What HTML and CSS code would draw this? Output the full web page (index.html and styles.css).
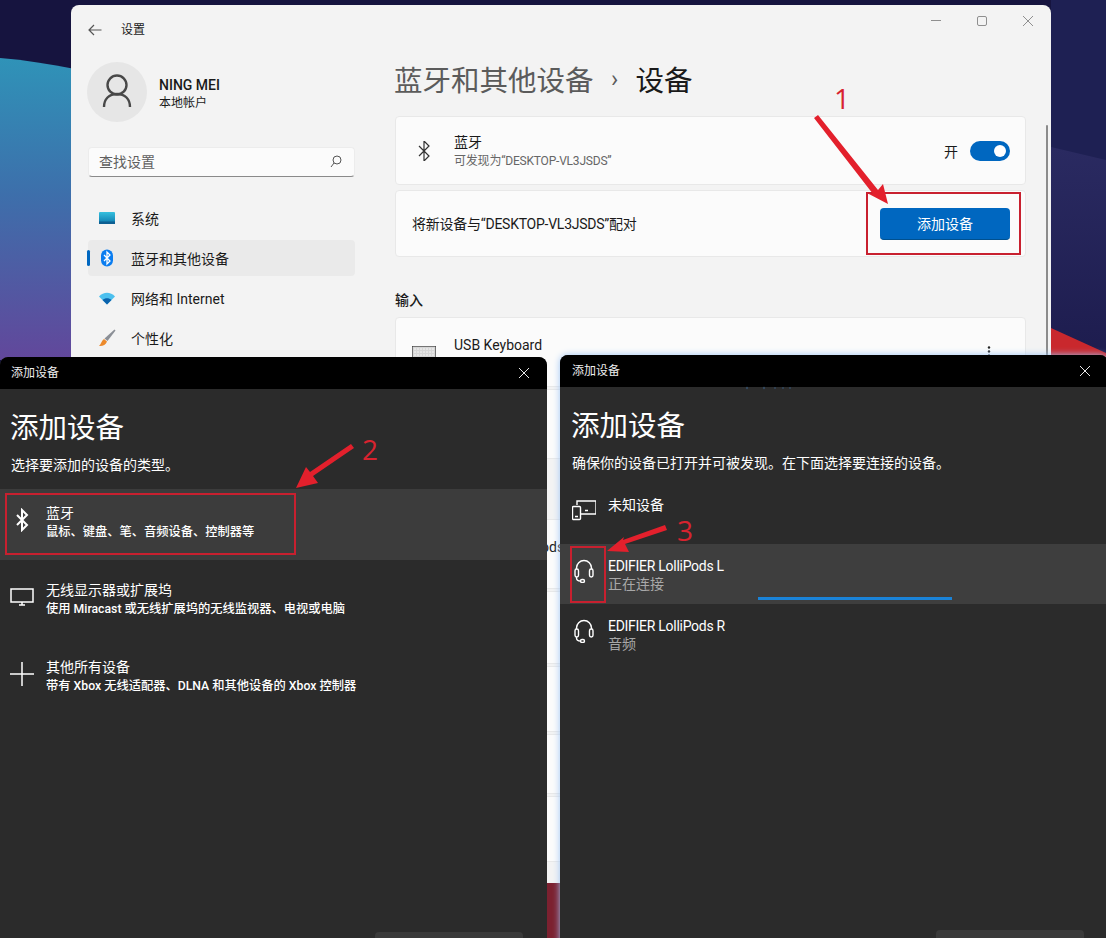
FILE: index.html
```html
<!doctype html>
<html>
<head>
<meta charset="UTF-8">
<title>添加设备</title>
<link rel="stylesheet" href="styles.css">
</head>
<body>

<!-- wallpaper -->
<svg class="wallpaper" width="1106" height="938" viewBox="0 0 1106 938">
  <defs>
    <linearGradient id="wave" x1="0" y1="0" x2="0" y2="1">
      <stop offset="0" stop-color="#2f93b8"/>
      <stop offset="0.45" stop-color="#3d6fab"/>
      <stop offset="1" stop-color="#62479b"/>
    </linearGradient>
    <linearGradient id="band" x1="0" y1="0" x2="0" y2="1">
      <stop offset="0" stop-color="#2a2a61"/>
      <stop offset="1" stop-color="#1d1c4e"/>
    </linearGradient>
  </defs>
  <rect width="1106" height="938" fill="#16143f"/>
  <rect x="1051" width="55" height="360" fill="#1e2053"/>
  <path d="M0 58C25 60 50 64 75 69V360H0Z" fill="url(#wave)"/>
  <path d="M1051 147L1106 160V360H1051Z" fill="url(#band)"/>
  <path d="M1051 328L1106 353V360H1051Z" fill="#c9282d"/>
  <rect x="547" y="883" width="13" height="55" fill="#7c2130"/>
</svg>

<!-- settings window -->
<section class="settings">
  <header class="settings-top">
    <svg class="back" width="14" height="12" viewBox="0 0 14 12"><path d="M13.5 6H1M6 1L1 6l5 5"/></svg>
    <span class="settings-name">设置</span>
    <div class="window-btns">
      <svg width="12" height="12" viewBox="0 0 12 12"><path d="M1 5.5H11"/></svg>
      <svg width="12" height="12" viewBox="0 0 12 12"><rect x="1.5" y="1.5" width="9" height="9" rx="1.5"/></svg>
      <svg width="12" height="12" viewBox="0 0 12 12"><path d="M1 1L11 11M11 1L1 11"/></svg>
    </div>
  </header>

  <div class="settings-body">
    <aside class="sidebar">
      <div class="account">
        <div class="avatar">
          <svg width="32" height="36" viewBox="0 0 32 36"><circle cx="16" cy="11" r="9.5"/><path d="M3 33c0-8 5-13 13-13s13 5 13 13"/></svg>
        </div>
        <div>
          <div class="account-name">NING MEI</div>
          <div class="account-type">本地帐户</div>
        </div>
      </div>

      <div class="search">
        <span>查找设置</span>
        <svg width="12" height="13" viewBox="0 0 12 13"><circle cx="7" cy="5" r="4"/><path d="M4 8L1 12"/></svg>
      </div>

      <nav class="nav">
        <div class="nav-item">
          <svg width="18" height="18" viewBox="0 0 18 18">
            <defs><linearGradient id="sys" x1="0" y1="0" x2="0" y2="1"><stop offset="0" stop-color="#35c0de"/><stop offset="1" stop-color="#0b77ac"/></linearGradient></defs>
            <rect x="1" y="3" width="16" height="12" rx="1" fill="url(#sys)"/>
            <rect x="1" y="12.5" width="16" height="2.5" fill="#0d5f92"/>
          </svg>
          <span>系统</span>
        </div>
        <div class="nav-item nav-active">
          <svg width="18" height="18" viewBox="0 0 18 18">
            <rect x="3" y="0.5" width="12" height="17" rx="6" fill="#0b7df0"/>
            <path class="nav-bt" d="M6 6l6 6-3 3V3l3 3-6 6"/>
          </svg>
          <span>蓝牙和其他设备</span>
        </div>
        <div class="nav-item">
          <svg width="18" height="18" viewBox="0 0 18 18">
            <path d="M1 7.5C5.500 2.500 12.500 2.500 17 7.500L9 15.500Z" fill="#4cc0ee"/>
            <path d="M4.500 11C7 8.500 11 8.500 13.500 11L9 15.500Z" fill="#0a62ac"/>
          </svg>
          <span>网络和 Internet</span>
        </div>
        <div class="nav-item">
          <svg width="18" height="18" viewBox="0 0 18 18">
            <path d="M16.500 0.500L17.500 1.500L9.500 12L6.500 9.500Z" fill="#8b8f96"/>
            <path d="M6 10L9 12.500C8 16 4 17.500 1 17C3 15.500 3.500 11.500 6 10Z" fill="#ec8a2c"/>
          </svg>
          <span>个性化</span>
        </div>
      </nav>
    </aside>

    <main class="main">
      <h1 class="crumbs"><span class="crumb-parent">蓝牙和其他设备</span><span class="crumb-sep">›</span><span>设备</span></h1>

      <div class="card card-bt">
        <svg class="card-icon" width="24" height="20" viewBox="0 0 24 20"><path d="M7 5l10 10-5 5V0l5 5L7 15"/></svg>
        <div class="card-text">
          <div class="card-title">蓝牙</div>
          <div class="card-sub">可发现为“DESKTOP-VL3JSDS”</div>
        </div>
        <span class="toggle-label">开</span>
        <span class="toggle"></span>
      </div>

      <div class="card card-pair">
        <span class="card-title pair-text">将新设备与“DESKTOP-VL3JSDS”配对</span>
        <button class="add-btn">添加设备</button>
      </div>

      <h2 class="section-head">输入</h2>
      <div class="card card-dev row-a">
        <svg class="card-icon" width="24" height="18" viewBox="0 0 24 18">
          <rect width="24" height="18" fill="#d6d6d6"/>
          <path class="keys" d="M2 3H22M2 6H22M2 9H22M2 12H22"/>
        </svg>
        <div class="card-text">
          <div class="card-title">USB Keyboard</div>
        </div>
        <svg class="kebab" width="4" height="12" viewBox="0 0 4 12"><circle cx="2" cy="1.500" r="1.200"/><circle cx="2" cy="5.500" r="1.200"/><circle cx="2" cy="9.500" r="1.200"/></svg>
      </div>
      <div class="card card-dev row-a"></div>

      <h2 class="section-head head-audio">音频</h2>
      <div class="card card-dev row-a">
        <div class="card-text indent"><div class="card-title">EDIFIER LolliPods</div></div>
      </div>
      <div class="card card-dev row-b"></div>
      <div class="card card-dev row-c"></div>
      <div class="card card-dev row-d"></div>
      <div class="card card-dev row-c"></div>
    </main>
  </div>
  <span class="scrollbar"></span>
</section>

<!-- left dialog -->
<section class="dialog dialog-left">
  <header class="dialog-top">
    <span>添加设备</span>
    <svg width="12" height="12" viewBox="0 0 12 12"><path d="M1 1L11 11M11 1L1 11"/></svg>
  </header>
  <div class="dialog-body">
    <h1 class="dialog-title">添加设备</h1>
    <p class="dialog-hint">选择要添加的设备的类型。</p>
    <div class="type-list">
      <div class="type-row type-active">
        <svg width="24" height="24" viewBox="0 0 24 24"><path class="thick" d="M7 7l10 10-5 5V2l5 5L7 17"/></svg>
        <div><div class="row-title">蓝牙</div><div class="row-sub">鼠标、键盘、笔、音频设备、控制器等</div></div>
      </div>
      <div class="type-row">
        <svg width="24" height="24" viewBox="0 0 24 24"><rect x="1" y="4" width="22" height="13"/><path d="M9 20H15M12 17V20"/></svg>
        <div><div class="row-title">无线显示器或扩展坞</div><div class="row-sub">使用 Miracast 或无线扩展坞的无线监视器、电视或电脑</div></div>
      </div>
      <div class="type-row">
        <svg width="24" height="24" viewBox="0 0 24 24"><path d="M0 12H24M12 0V24"/></svg>
        <div><div class="row-title">其他所有设备</div><div class="row-sub">带有 Xbox 无线适配器、DLNA 和其他设备的 Xbox 控制器</div></div>
      </div>
    </div>
  </div>
  <footer class="dialog-foot"><span class="cancel"></span></footer>
</section>

<!-- right dialog -->
<section class="dialog dialog-right">
  <header class="dialog-top">
    <span>添加设备</span>
    <svg width="12" height="12" viewBox="0 0 12 12"><path d="M1 1L11 11M11 1L1 11"/></svg>
  </header>
  <div class="dialog-body">
    <h1 class="dialog-title">添加设备</h1>
    <p class="dialog-hint">确保你的设备已打开并可被发现。在下面选择要连接的设备。</p>
    <div class="found-list">
      <div class="found-row">
        <svg class="device-icon" width="24" height="24" viewBox="0 0 24 24"><path d="M5 6V2H24V15H9"/><rect x="0.500" y="7.500" width="8" height="13" rx="1"/><path d="M3 17.500H6M13 11.500H16"/></svg>
        <div><div class="row-title">未知设备</div></div>
      </div>
      <div class="found-row found-active">
        <svg width="24" height="24" viewBox="0 0 24 24"><path d="M4.500 10V9a7.500 7.500 0 0 1 15 0v1"/><rect x="3" y="10" width="3.500" height="8" rx="1.700"/><rect x="17.500" y="10" width="3.500" height="8" rx="1.700"/><path d="M4.500 18v1c0 2 1.500 3 4 3"/><rect x="8.500" y="20.500" width="4" height="3" rx="1.500"/></svg>
        <div><div class="row-title name">EDIFIER LolliPods L</div><div class="row-state">正在连接</div></div>
        <span class="progress"></span>
      </div>
      <div class="found-row">
        <svg width="24" height="24" viewBox="0 0 24 24"><path d="M4.500 10V9a7.500 7.500 0 0 1 15 0v1"/><rect x="3" y="10" width="3.500" height="8" rx="1.700"/><rect x="17.500" y="10" width="3.500" height="8" rx="1.700"/><path d="M4.500 18v1c0 2 1.500 3 4 3"/><rect x="8.500" y="20.500" width="4" height="3" rx="1.500"/></svg>
        <div><div class="row-title name">EDIFIER LolliPods R</div><div class="row-state">音频</div></div>
      </div>
    </div>
  </div>
  <footer class="dialog-foot"><span class="cancel"></span></footer>
</section>

<!-- red notes drawn over the screenshots -->
<svg class="notes" width="1106" height="938" viewBox="0 0 1106 938">
  <g fill="#33485f">
    <circle cx="747" cy="388" r="1.200"/><circle cx="764" cy="388" r="1.200"/><circle cx="775" cy="388" r="1"/><circle cx="783" cy="388" r="1"/><circle cx="790" cy="388" r="1"/>
  </g>
  <rect class="note-box" x="867" y="193" width="153" height="61"/>
  <rect class="note-box" x="6" y="494" width="289" height="60"/>
  <rect class="note-box" x="571" y="547" width="34" height="55"/>
  <path class="note-arrow" d="M814 118L818 115L878 190L883 184L888 204L867 193L873 194Z"/>
  <path class="note-arrow" d="M351 444L354 448L313 476L318 483L296 488L306 467L310 472Z"/>
  <path class="note-arrow" d="M665 525L667 530L625 544L629 552L607 551L624 537L623 540Z"/>
</svg>
<span class="note-num num-1">1</span>
<span class="note-num num-2">2</span>
<span class="note-num num-3">3</span>

</body>
</html>
```

FILE: styles.css
```css
* { box-sizing: border-box; }
body { margin: 0; width: 1106px; height: 938px; position: relative; overflow: hidden; background: #16143f; font-family: Roboto, "Noto Sans CJK SC", sans-serif; font-size: 14px; color: #1a1a1a; }
h1, h2, p { margin: 0; font-weight: normal; }

.wallpaper { position: absolute; left: 0; top: 0; display: block; }

/* settings window */
.settings { position: absolute; left: 71px; top: 5px; width: 980px; height: 878px; background: #f3f3f3; border-radius: 8px 8px 0 0; overflow: hidden; }
.settings-top { display: flex; align-items: center; height: 48px; padding: 1px 17px 0 17px; }
.back { fill: none; stroke: #555; stroke-width: 1.2; }
.settings-name { margin-left: 19px; font-size: 12px; line-height: 16px; }
.window-btns { margin-left: auto; display: flex; gap: 34px; margin-top: -17px; }
.window-btns svg { fill: none; stroke: #8f8f8f; stroke-width: 1; }
.scrollbar { position: absolute; left: 975px; top: 120px; bottom: 0; width: 2px; border-radius: 1px; background: #8b8b8b; }

.settings-body { display: flex; }
.sidebar { width: 284px; padding: 9px 0 0 17px; flex: none; }
.account { display: flex; align-items: center; gap: 12px; margin-left: -1px; }
.avatar { width: 60px; height: 60px; border-radius: 50%; background: #e6e6e6; display: flex; align-items: center; justify-content: center; }
.avatar svg { fill: none; stroke: #484848; stroke-width: 2.4; }
.account-name { font-size: 14px; font-weight: 500; line-height: 18px; margin-top: 3px; }
.account-type { font-size: 12px; line-height: 16px; margin-top: 1px; }

.search { margin-top: 25px; height: 30px; display: flex; align-items: center; justify-content: space-between; padding: 0 12px 2px 10px; background: #fbfbfb; border: 1px solid #ececec; border-bottom: 1px solid #8a8a8a; border-radius: 4px; color: #5f5f5f; }
.search svg { fill: none; stroke: #555; stroke-width: 1; }

.nav { margin-top: 23px; display: flex; flex-direction: column; gap: 4px; }
.nav-item { position: relative; height: 36px; display: flex; align-items: center; gap: 15px; padding-left: 10px; border-radius: 4px; }
.nav-item svg { flex: none; margin-top: -1px; }
.nav-active { background: #eaeaea; }
.nav-active::before { content: ""; position: absolute; left: -1px; top: 10px; width: 3px; height: 16px; border-radius: 2px; background: #0067c0; }
.nav-bt { fill: none; stroke: #fff; stroke-width: 1.3; }

.main { flex: 1; padding: 9px 25px 0 40px; }
.crumbs { display: flex; align-items: center; height: 40px; font-size: 28.5px; line-height: 40px; margin: 0 0 14px -1px; }
.crumb-parent { color: #5b5b5b; }
.crumb-sep { width: 42px; text-align: center; font-size: 24px; color: #5b5b5b; margin-top: -6px; }

.card { display: flex; align-items: center; background: #fbfbfb; border: 1px solid #e8e8e8; border-radius: 4px; margin-bottom: 2px; }
.card-icon { flex: none; margin-left: 16px; fill: none; stroke: #333; stroke-width: 1.2; }
.card-text { margin-left: 18px; flex: 1; }
.card-title { font-size: 14px; line-height: 18px; }
.card-sub { font-size: 12px; line-height: 16px; color: #666; margin-top: 2px; letter-spacing: -0.2px; }
.card-bt { height: 69px; margin-bottom: 5px; padding-right: 15px; }
.card-bt .card-text { margin-top: 1px; }
.toggle-label { margin-right: 12px; }
.toggle { position: relative; width: 40px; height: 20px; border-radius: 10px; background: #0067c0; }
.toggle::after { content: ""; position: absolute; right: 4px; top: 4px; width: 12px; height: 12px; border-radius: 50%; background: #fff; }
.card-pair { height: 67px; padding: 0 15px 0 16px; justify-content: space-between; }
.pair-text { letter-spacing: -0.25px; }
.add-btn { width: 130px; height: 32px; border: 0; border-bottom: 1px solid #00508f; border-radius: 4px; background: #0067c0; color: #fff; font: inherit; font-size: 14px; }

.section-head { font-size: 14px; font-weight: 500; line-height: 20px; margin: 33px 0 7px; }
.head-audio { margin: 38px 0 0; height: 22px; }
.card-dev { align-items: flex-start; padding-top: 18px; }
.card-dev .card-icon { margin-top: 10px; }
.keys { stroke: #f5f5f5; stroke-width: 1; stroke-dasharray: 2 1; }
.indent { margin-left: 58px; }
.kebab { margin: 10px 34px 0 0; fill: #222; }
.row-a { height: 70px; }
.row-b { height: 73px; }
.row-c { height: 66px; }
.row-d { height: 60px; }

/* the two dark dialogs */
.dialog { position: absolute; display: flex; flex-direction: column; height: 625px; background: #2b2b2b; color: #fff; border-radius: 8px 8px 0 0; overflow: hidden; }
.dialog-left { left: 0; top: 357px; width: 547px; }
.dialog-right { left: 560px; top: 355px; width: 548px; box-shadow: 0 0 7px #9cc4f5; overflow: visible; }
.dialog-top { display: flex; align-items: center; justify-content: space-between; flex: none; height: 32px; padding: 0 17px 3px 11px; background: #000; font-size: 12px; border-radius: 8px 8px 0 0; color: #eee; }
.dialog-right .dialog-top { padding-left: 12px; }
.dialog-top svg { fill: none; stroke: #e8e8e8; stroke-width: 1; margin-top: 3px; }
.dialog-body { flex: 1; }
.dialog-title { font-size: 28.5px; line-height: 40px; padding: 20px 10px 0; }
.dialog-right .dialog-title { padding-left: 11px; }
.dialog-hint { font-size: 14px; line-height: 20px; padding: 6px 11px 0; }
.dialog-right .dialog-hint { padding-left: 12px; }

.type-list { margin-top: 14px; display: flex; flex-direction: column; gap: 6px; }
.type-row { display: flex; gap: 12px; height: 71px; padding: 14px 0 0 10px; }
.type-row svg { flex: none; margin-top: 5px; fill: none; stroke: #fff; stroke-width: 1.5; }
.type-row .thick { stroke-width: 2; }
.type-active { background: #3c3c3c; }
.row-title { font-size: 14px; line-height: 20px; }
.row-title.name { letter-spacing: -0.28px; }
.row-sub { font-size: 12.25px; line-height: 18px; font-weight: 500; }
.row-state { font-size: 14px; line-height: 18px; margin-top: -1px; color: #a8a8a8; }

.found-list { margin-top: 11px; }
.found-row { position: relative; display: flex; gap: 12px; height: 60px; padding: 12px 0 0 12px; }
.found-row svg { flex: none; margin-top: 3px; fill: none; stroke: #fff; stroke-width: 1.4; }
.found-row .device-icon { margin-top: 4px; }
.found-row:first-child { padding-top: 11px; }
.found-active { background: #3e3e3e; }
.progress { position: absolute; left: 198px; bottom: 4px; width: 194px; height: 3px; background: #1a83d8; }

.dialog-foot { flex: none; height: 50px; padding-right: 24px; display: flex; justify-content: flex-end; }
.cancel { width: 148px; height: 32px; border-radius: 4px; background: #3a3a3a; }

/* red notes */
.notes { position: absolute; left: 0; top: 0; display: block; pointer-events: none; }
.note-box { fill: none; stroke: #c8202f; stroke-width: 2; }
.note-arrow { fill: #e3202c; }
.note-num { position: absolute; font-family: "Open Sans", sans-serif; font-size: 28px; line-height: 32px; color: #d8232f; }
.num-1 { left: 834px; top: 82px; }
.num-2 { left: 362px; top: 433px; }
.num-3 { left: 677px; top: 514px; }
```
